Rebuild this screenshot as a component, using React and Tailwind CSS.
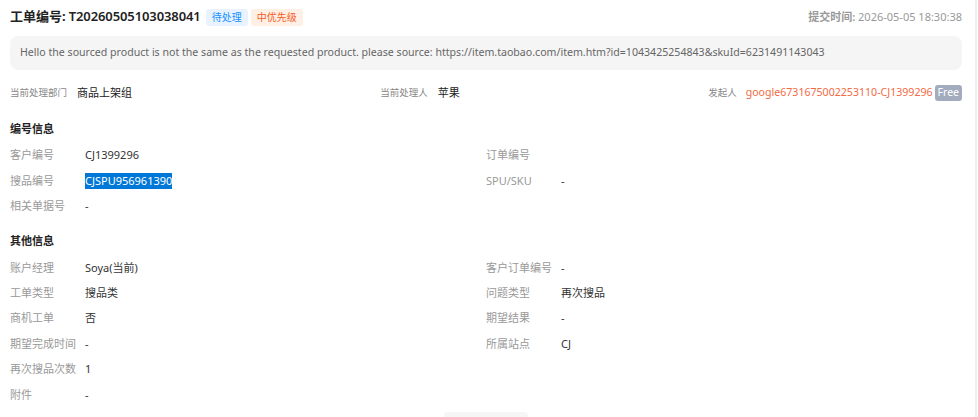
import React from 'react';

const ticket = {
  no: 'T20260505103038041',
  submittedAt: '2026-05-05 18:30:38',
  message:
    'Hello the sourced product is not the same as the requested product. please source: https://item.taobao.com/item.htm?id=1043425254843&skuId=6231491143043',
  department: '商品上架组',
  handler: '苹果',
  initiator: 'google6731675002253110-CJ1399296',
};

const numberRows = [
  [
    { label: '客户编号', value: 'CJ1399296' },
    { label: '订单编号', value: '' },
  ],
  [
    { label: '搜品编号', value: 'CJSPU956961390', selected: true },
    { label: 'SPU/SKU', value: '-' },
  ],
  [{ label: '相关单据号', value: '-' }],
];

const otherRows = [
  [
    { label: '账户经理', value: 'Soya(当前)' },
    { label: '客户订单编号', value: '-' },
  ],
  [
    { label: '工单类型', value: '搜品类' },
    { label: '问题类型', value: '再次搜品' },
  ],
  [
    { label: '商机工单', value: '否' },
    { label: '期望结果', value: '-' },
  ],
  [
    { label: '期望完成时间', value: '-' },
    { label: '所属站点', value: 'CJ' },
  ],
  [{ label: '再次搜品次数', value: '1' }],
  [{ label: '附件', value: '-' }],
];

const Field = ({ label, value, selected }) => (
  <div className="flex items-center">
    <span className="w-[75px] shrink-0 text-[11px] text-[#999]">{label}</span>
    {selected ? (
      <span className="bg-[#0078d7] text-white text-[11px] leading-[16px]">{value}</span>
    ) : (
      <span className="text-[11px] text-[#333]">{value}</span>
    )}
  </div>
);

const Section = ({ title, rows, className }) => (
  <div className={className}>
    <div className="h-[20px] flex items-center text-[11px] font-bold text-[#222]">{title}</div>
    <div className="mt-[4px]">
      {rows.map((row, i) => (
        <div key={i} className="grid grid-cols-2 h-[25.4px] items-center">
          {row.map((f) => (
            <Field key={f.label} {...f} />
          ))}
        </div>
      ))}
    </div>
  </div>
);

export default function App() {
  return (
    <div
      className="flex w-[978px] h-[417px] overflow-hidden bg-white"
      style={{ fontFamily: '"Noto Sans", "Noto Sans CJK SC", sans-serif' }}
    >
      <div className="flex-1 pl-[10px] pr-[13px]">
        {/* header */}
        <div className="h-[34px] flex items-center justify-between">
          <div className="flex items-center">
            <span className="text-[13px] font-bold text-[#222]">工单编号:</span>
            <span className="ml-[3px] text-[13px] font-semibold text-[#222] tracking-[-0.1px]">{ticket.no}</span>
            <span className="ml-[5px] px-[6px] h-[17px] flex items-center rounded-[3px] bg-[#e8f3ff] text-[10px] text-[#1890ff]">
              待处理
            </span>
            <span className="ml-[3px] px-[6px] h-[17px] flex items-center rounded-[3px] bg-[#fff0e6] text-[10px] text-[#fa5a1e]">
              中优先级
            </span>
          </div>
          <div className="text-[11px] text-[#999]">
            <span className="font-semibold">提交时间:</span> {ticket.submittedAt}
          </div>
        </div>

        {/* customer message */}
        <div className="mt-[2px] h-[34px] flex items-center px-[10px] rounded-[8px] bg-[#f5f5f5] text-[10.6px] text-[#666] whitespace-nowrap">
          {ticket.message}
        </div>

        {/* assignment */}
        <div className="mt-[10px] h-[26px] flex items-center justify-between">
          <div className="flex items-center">
            <span className="text-[9.5px] text-[#888]">当前处理部门</span>
            <span className="ml-[10px] text-[11px] text-[#222]">{ticket.department}</span>
          </div>
          <div className="flex items-center">
            <span className="text-[9.5px] text-[#888]">当前处理人</span>
            <span className="ml-[10px] text-[11px] text-[#222]">{ticket.handler}</span>
          </div>
          <div className="flex items-center">
            <span className="text-[9.5px] text-[#888]">发起人</span>
            <span className="ml-[9px] text-[10.6px] text-[#f26b45]">{ticket.initiator}</span>
            <span className="ml-[2px] px-[3px] h-[16px] flex items-center rounded-[3px] bg-[#a3acbe] text-[10.5px] text-white">
              Free
            </span>
          </div>
        </div>

        <Section title="编号信息" rows={numberRows} className="mt-[13px]" />
        <Section title="其他信息" rows={otherRows} className="mt-[12px]" />

        <div className="mt-[4px] mx-auto w-[84px] h-[10px] rounded-t-[4px] bg-[#f6f6f6]" />
      </div>
      <div className="w-[2px] h-full bg-[#eeeef4]" />
      <div className="w-[1px]" />
    </div>
  );
}
